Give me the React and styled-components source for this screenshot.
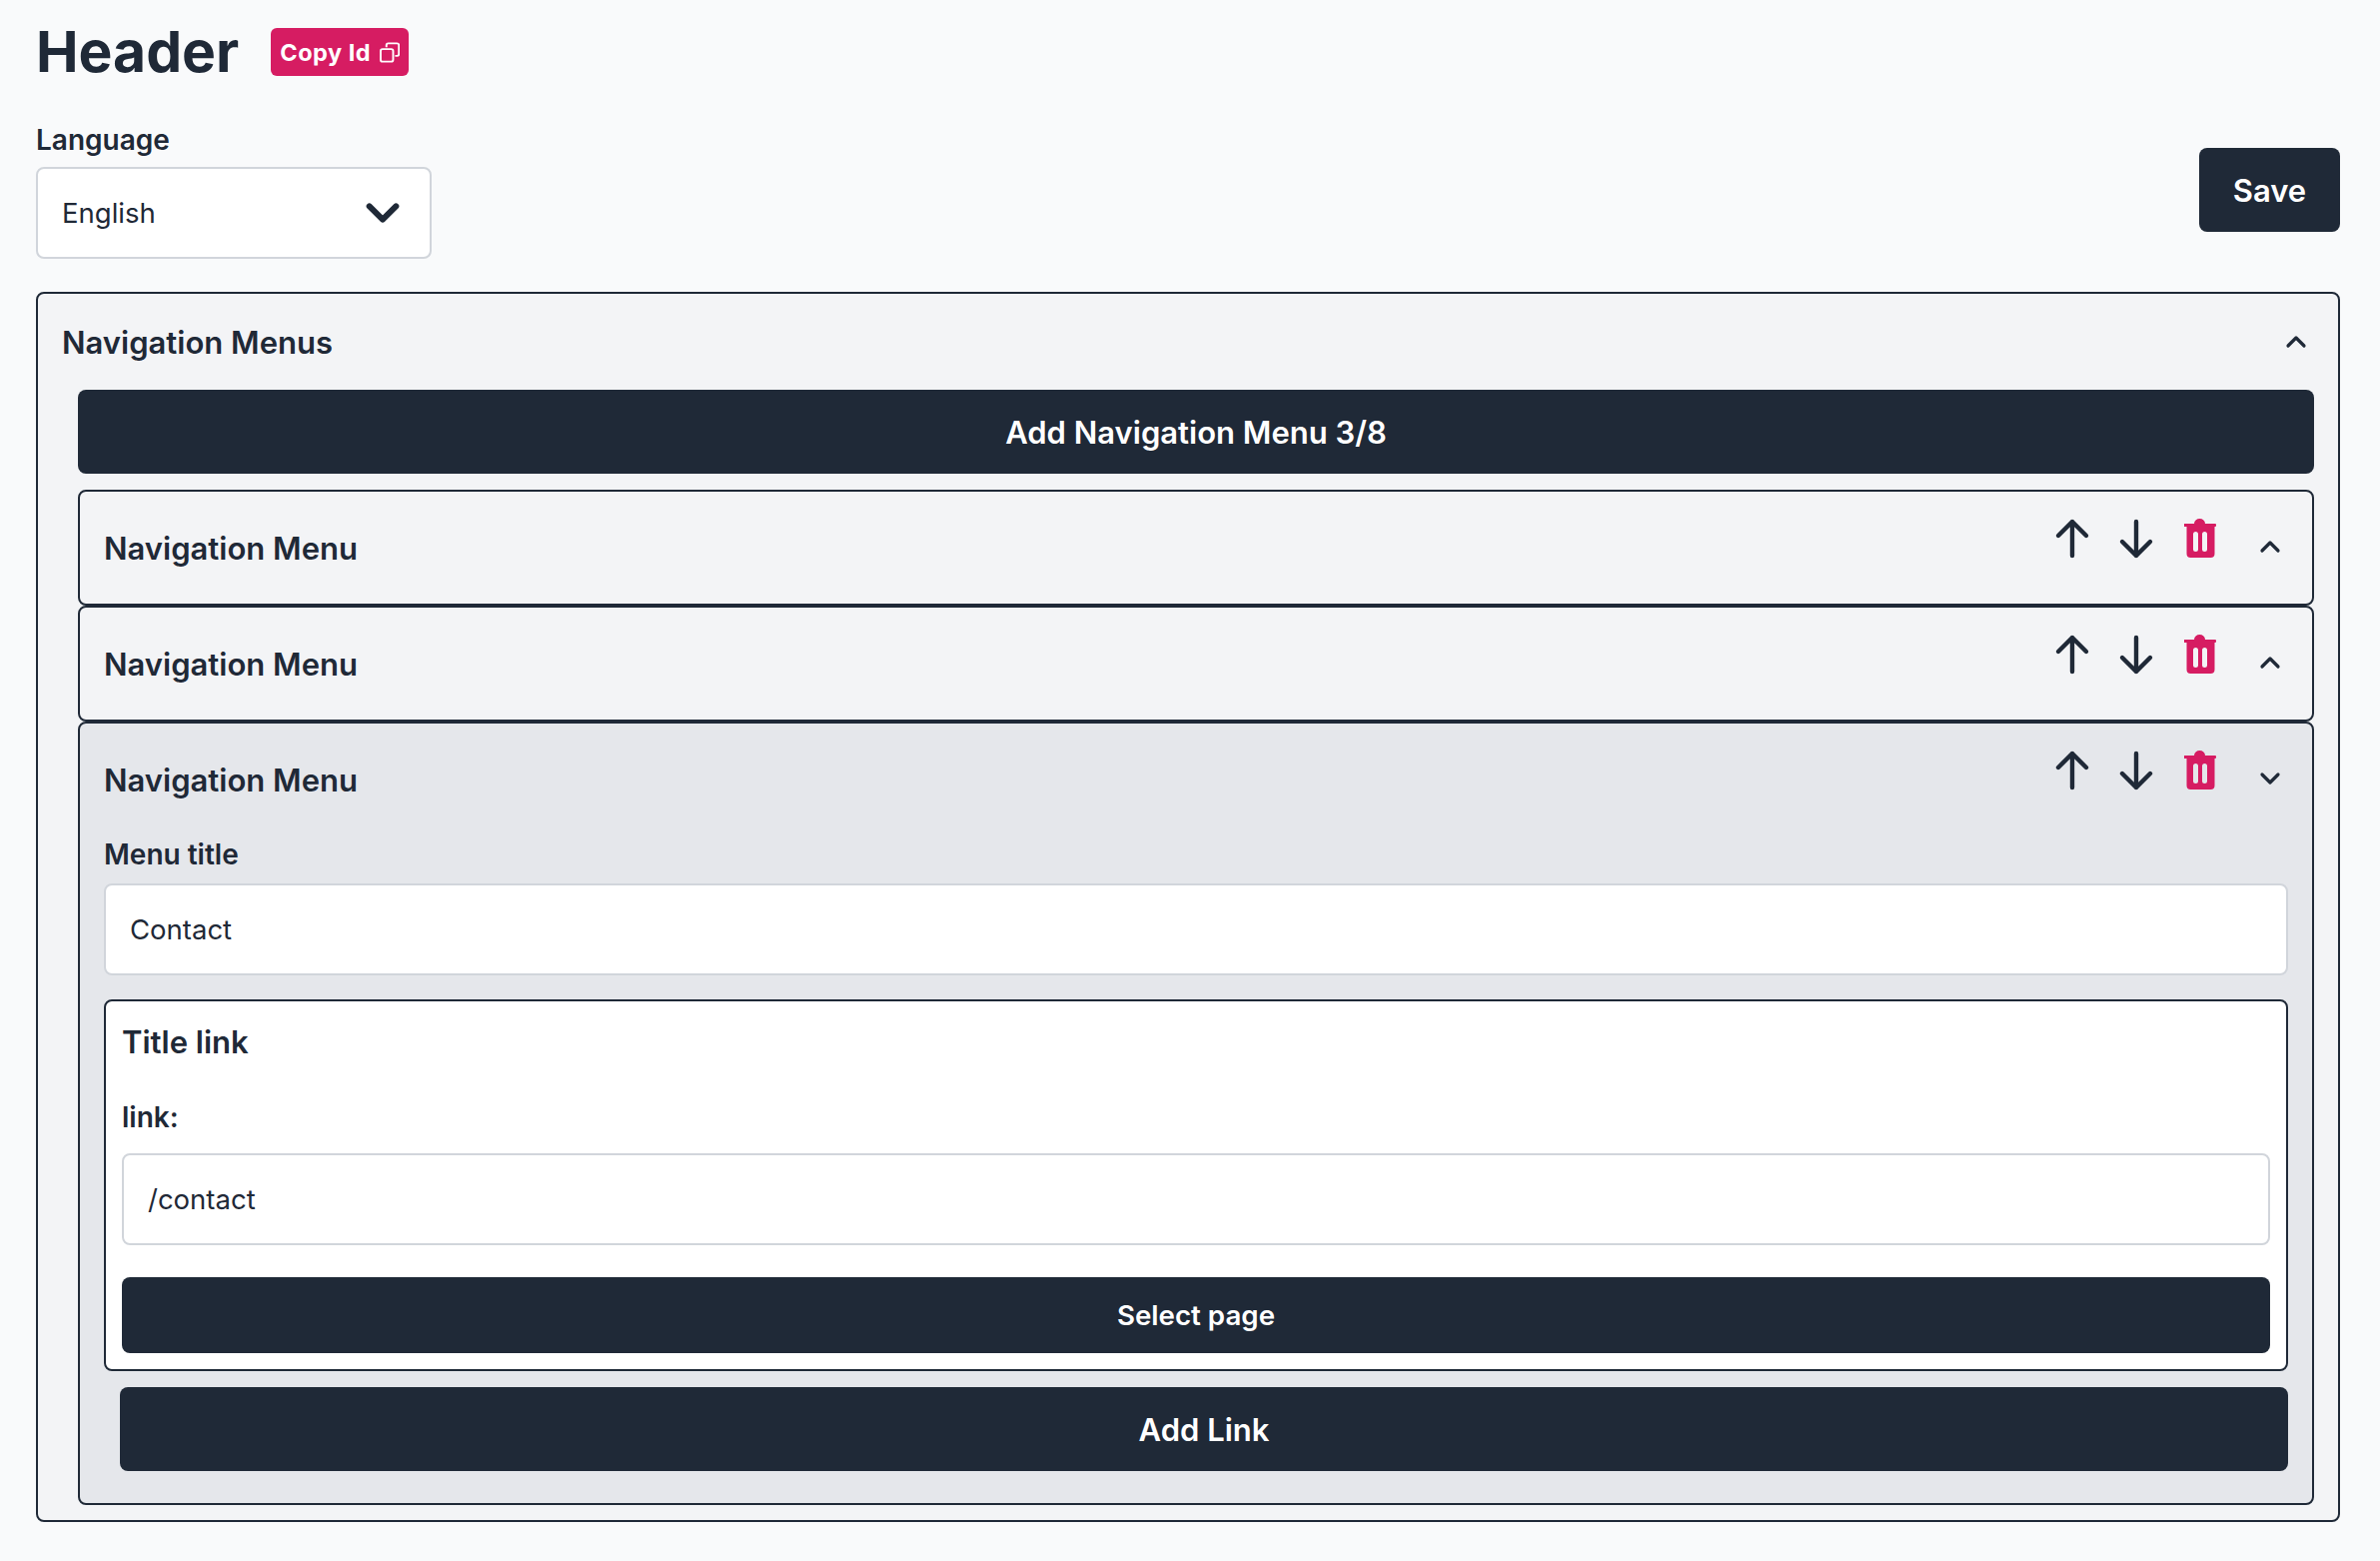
import React from 'react';
import styled, { createGlobalStyle } from 'styled-components';

const ink = '#1f2937';
const pink = '#d61c62';

const Global = createGlobalStyle`
  html, body { margin: 0; background: #f9fafb; }
  body { font-family: Inter, "Liberation Sans", sans-serif; color: ${ink}; }
  * { box-sizing: border-box; }
`;

const Page = styled.div`
  padding: 0 40px 39px 36px;
  height: 1562px;
`;

const TitleRow = styled.div`
  display: flex;
  align-items: center;
  height: 104px;
  gap: 32px;
`;

const Title = styled.h1`
  margin: 0;
  font-size: 57px;
  font-weight: 700;
  line-height: 104px;
`;

const CopyBadge = styled.button`
  display: flex;
  align-items: center;
  gap: 9px;
  height: 48px;
  width: 138px;
  padding: 0 9px;
  border: 0;
  border-radius: 6px;
  background: ${pink};
  color: #fff;
  font: 700 23.5px Inter, sans-serif;
  letter-spacing: 0.5px;
  white-space: nowrap;
`;

const TopRow = styled.div`
  display: flex;
  justify-content: space-between;
  align-items: flex-end;
  height: 188px;
  padding-bottom: 33px;
`;

const Label = styled.label`
  display: block;
  font-size: 28px;
  font-weight: 600;
  line-height: 36px;
  margin-top: ${(p) => p.$top || 0}px;
  margin-bottom: ${(p) => p.$gap || 11}px;
`;

const Field = styled.div`
  display: flex;
  align-items: center;
  justify-content: space-between;
  width: ${(p) => p.$width || '100%'};
  height: 92px;
  padding: 0 24px;
  background: #fff;
  border: 2px solid #d1d5db;
  border-radius: 8px;
  font-size: 27.5px;
`;

const SelectArrow = styled.span`
  display: flex;
  margin-right: 3px;
`;

const DarkButton = styled.button`
  display: flex;
  align-items: center;
  justify-content: center;
  width: 100%;
  height: 84px;
  border: 0;
  border-radius: 8px;
  background: ${ink};
  color: #fff;
  font: 600 31px Inter, sans-serif;
`;

const SaveButton = styled(DarkButton)`
  width: 141px;
  margin-bottom: 27px;
`;

const SelectPageButton = styled(DarkButton)`
  height: 76px;
  margin-top: 32px;
  font-size: 27.7px;
`;

const AddLinkButton = styled(DarkButton)`
  width: 2170px;
  margin: 16px 0 0 16px;
`;

const Panel = styled.section`
  border: 2px solid ${ink};
  border-radius: 8px;
  background: #f3f4f6;
  height: 1231px;
  padding: 0 24px 0 40px;
`;

const PanelHead = styled.div`
  display: flex;
  align-items: center;
  justify-content: space-between;
  height: 96px;
  margin-left: -16px;
  padding-right: 6px;
`;

const Heading = styled.h2`
  margin: 0;
  font-size: 31px;
  font-weight: 600;
`;

const Stack = styled.div`
  display: flex;
  flex-direction: column;
  margin-top: 16px;
`;

const Item = styled.div`
  border: 2px solid ${ink};
  border-radius: 8px;
  background: ${(p) => (p.$open ? '#e5e7eb' : '#f3f4f6')};
  height: ${(p) => (p.$open ? 784 : 116)}px;
  padding: 0 24px;
`;

const ItemHead = styled.div`
  display: flex;
  align-items: center;
  justify-content: space-between;
  height: 113px;
`;

const Actions = styled.div`
  display: flex;
  align-items: center;
  margin: -20px -20px 0 0;
`;

const IconSlot = styled.span`
  display: flex;
  width: ${(p) => p.$width || 64}px;
  justify-content: center;
  margin-top: ${(p) => p.$top || 0}px;
`;

const Section = styled.div`
  margin-top: 24px;
  padding: 0 16px;
  height: 372px;
  background: #fff;
  border: 2px solid ${ink};
  border-radius: 8px;
`;

const SectionTitle = styled.h3`
  margin: 0;
  padding-top: 19px;
  font-size: 31px;
  font-weight: 600;
  line-height: 44px;
`;

const Arrow = ({ up }) => (
  <svg width="36" height="42" viewBox="0 0 36 42" fill="none" stroke={ink} strokeWidth="4.4" strokeLinecap="round" strokeLinejoin="round">
    {up ? <path d="M18 38V4M4 18 18 4l14 14" /> : <path d="M18 4v34M4 24l14 14 14-14" />}
  </svg>
);

const Trash = () => (
  <svg width="33" height="39" viewBox="1 0 33 39">
    <path fill={pink} fillRule="evenodd" d="M11 5a5.5 5 0 0 1 11 0h10a1 1 0 0 1 1 1v1a1 1 0 0 1-1 1h-.5v27a4 4 0 0 1-4 4h-20a4 4 0 0 1-4-4V8H1a1 1 0 0 1-1-1V6a1 1 0 0 1 1-1ZM10 15.5v15a2.5 2.5 0 0 0 5 0v-15a2.5 2.5 0 0 0-5 0ZM19 15.5v15a2.5 2.5 0 0 0 5 0v-15a2.5 2.5 0 0 0-5 0Z" />
  </svg>
);

const Chevron = ({ up, size = 24, width = 3.2 }) => (
  <svg width={size} height={size} viewBox="0 0 24 24" fill="none" stroke={ink} strokeWidth={width} strokeLinecap="round" strokeLinejoin="round">
    {up ? <path d="M4 16l8-8 8 8" /> : <path d="M4 8l8 8 8-8" />}
  </svg>
);

const CopyIcon = () => (
  <svg width="21" height="21" viewBox="0 0 21 21" fill="none" stroke="#fff" strokeWidth="2">
    <rect x="1" y="7" width="13" height="13" rx="2" />
    <path d="M7 5V3a2 2 0 0 1 2-2h9a2 2 0 0 1 2 2v9a2 2 0 0 1-2 2h-2" />
  </svg>
);

const MenuHead = ({ open }) => (
  <ItemHead>
    <Heading>Navigation Menu</Heading>
    <Actions>
      <IconSlot><Arrow up /></IconSlot>
      <IconSlot><Arrow /></IconSlot>
      <IconSlot><Trash /></IconSlot>
      <IconSlot $width={76} $top={17}><Chevron up={!open} /></IconSlot>
    </Actions>
  </ItemHead>
);

export default function App() {
  return (
    <Page>
      <Global />
      <TitleRow>
        <Title>Header</Title>
        <CopyBadge>Copy Id <CopyIcon /></CopyBadge>
      </TitleRow>
      <TopRow>
        <div>
          <Label $gap={9}>Language</Label>
          <Field $width="396px">
            English
            <SelectArrow><Chevron size={40} width={3.6} /></SelectArrow>
          </Field>
        </div>
        <SaveButton>Save</SaveButton>
      </TopRow>
      <Panel>
        <PanelHead>
          <Heading>Navigation Menus</Heading>
          <Chevron up />
        </PanelHead>
        <DarkButton>Add Navigation Menu 3/8</DarkButton>
        <Stack>
          <Item><MenuHead /></Item>
          <Item><MenuHead /></Item>
          <Item $open>
            <MenuHead open />
            <Label>Menu title</Label>
            <Field>Contact</Field>
            <Section>
              <SectionTitle>Title link</SectionTitle>
              <Label as="div" $top={35} $gap={18}>link:</Label>
              <Field>/contact</Field>
              <SelectPageButton>Select page</SelectPageButton>
            </Section>
            <AddLinkButton>Add Link</AddLinkButton>
          </Item>
        </Stack>
      </Panel>
    </Page>
  );
}
